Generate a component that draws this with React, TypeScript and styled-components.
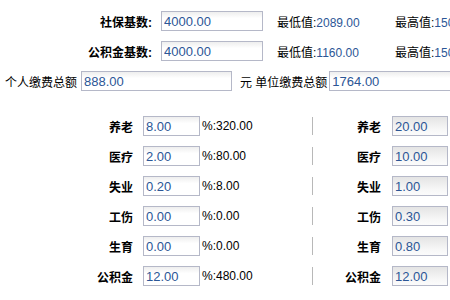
import styled, { createGlobalStyle } from "styled-components";

const GlobalStyle = createGlobalStyle`
  html, body {
    margin: 0;
    padding: 0;
    background: #ffffff;
    overflow: hidden;
  }
  body {
    font: 12px "Liberation Sans", "Noto Sans CJK SC", sans-serif;
    color: #000;
  }
`;

const Page = styled.div`
  width: 450px;
  height: 300px;
  padding-top: 6px;
  box-sizing: border-box;
  white-space: nowrap;
  overflow: hidden;
`;

const Row = styled.div<{ $indent?: number }>`
  display: flex;
  align-items: center;
  height: 30px;
  padding-left: ${({ $indent }) => $indent ?? 0}px;
`;

const Label = styled.span<{ $width: number; $bold?: boolean }>`
  flex: none;
  width: ${({ $width }) => $width}px;
  text-align: right;
  font-weight: ${({ $bold }) => ($bold ? "bold" : "normal")};
`;

const Text = styled.span<{ $gap?: number; $width?: number }>`
  flex: none;
  margin-left: ${({ $gap }) => $gap ?? 0}px;
  width: ${({ $width }) => ($width ? `${$width}px` : "auto")};
`;

const Value = styled.span`
  color: #2c5696;
`;

const Field = styled.input<{ $width: number; $gap: number; $shaded?: boolean }>`
  flex: none;
  box-sizing: border-box;
  width: ${({ $width }) => $width}px;
  height: 20px;
  margin: 0 0 0 ${({ $gap }) => $gap}px;
  padding: 0 2px;
  border: 1px solid #b5b8c8;
  background: ${({ $shaded }) =>
    $shaded
      ? "linear-gradient(#e4e4e4, #f7f7f7 70%, #fbfbfb)"
      : "linear-gradient(#eeeeee, #ffffff 35%)"};
  color: #2c5696;
  font: 13px "Liberation Sans", sans-serif;
  outline: none;
`;

const Rates = styled.div`
  margin-top: 15px;
`;

const Divider = styled.span`
  flex: none;
  width: 1px;
  height: 18px;
  background: #b8b8b8;
`;

const bases = [
  { label: "社保基数:", value: "4000.00", min: "2089.00", max: "15000.00" },
  { label: "公积金基数:", value: "4000.00", min: "1160.00", max: "15000.00" },
];

const rates = [
  { name: "养老", own: "8.00", ownAmount: "320.00", unit: "20.00" },
  { name: "医疗", own: "2.00", ownAmount: "80.00", unit: "10.00" },
  { name: "失业", own: "0.20", ownAmount: "8.00", unit: "1.00" },
  { name: "工伤", own: "0.00", ownAmount: "0.00", unit: "0.30" },
  { name: "生育", own: "0.00", ownAmount: "0.00", unit: "0.80" },
  { name: "公积金", own: "12.00", ownAmount: "480.00", unit: "12.00" },
];

export default function App() {
  return (
    <Page>
      <GlobalStyle />
      {bases.map((b) => (
        <Row key={b.label}>
          <Label $width={152} $bold>
            {b.label}
          </Label>
          <Field $width={102} $gap={9} readOnly value={b.value} />
          <Text $gap={14} $width={118}>
            最低值:<Value>{b.min}</Value>
          </Text>
          <Text>
            最高值:<Value>{b.max}</Value>
          </Text>
        </Row>
      ))}
      <Row $indent={5}>
        <Text>个人缴费总额</Text>
        <Field $width={151} $gap={4} readOnly value="888.00" />
        <Text $gap={8}>元 单位缴费总额</Text>
        <Field $width={151} $gap={2} readOnly value="1764.00" />
      </Row>
      <Rates>
        {rates.map((r) => (
          <Row key={r.name}>
            <Label $width={133} $bold>
              {r.name}
            </Label>
            <Field $width={57} $gap={10} readOnly value={r.own} />
            <Text $gap={2} $width={110}>
              %:{r.ownAmount}
            </Text>
            <Divider />
            <Label $width={68} $bold>
              {r.name}
            </Label>
            <Field $width={56} $gap={11} $shaded readOnly value={r.unit} />
          </Row>
        ))}
      </Rates>
    </Page>
  );
}
